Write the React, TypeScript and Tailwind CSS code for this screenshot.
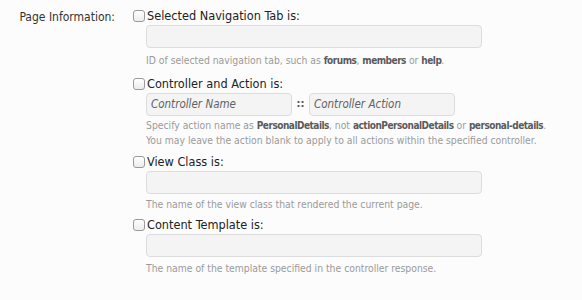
import type { ReactNode } from "react"

const font = { fontFamily: '"DejaVu Sans Condensed", "DejaVu Sans", sans-serif' }

function Box() {
  return (
    <span className="inline-block w-[12px] h-[12px] rounded-[3px] border border-[#9a9a9a] bg-gradient-to-b from-white to-[#ececec] shrink-0" />
  )
}

function Check({ label }: { label: string }) {
  return (
    <div className="flex items-center h-[14px] gap-[2px]">
      <Box />
      <span className="text-[12.6px] text-[#222] leading-none whitespace-nowrap">{label}</span>
    </div>
  )
}

function Field({ w = "w-[336px]", placeholder }: { w?: string; placeholder?: string }) {
  return (
    <div
      className={`${w} h-[23px] rounded-[4px] border border-[#dcdcdc] bg-[#f4f4f4] flex items-center px-[4px] text-[11.5px] italic text-[#626262]`}
    >
      {placeholder}
    </div>
  )
}

function Hint({ children }: { children: ReactNode }) {
  return <p className="text-[10.3px] leading-[14px] text-[#9a9a9a] whitespace-nowrap">{children}</p>
}

// bold words in the hints are narrower than DejaVu's bold
const B = ({ children }: { children: ReactNode }) => (
  <b className="font-bold text-[10px] tracking-[-0.5px] text-[#5a5a5a]">{children}</b>
)

export default function App() {
  return (
    <div className="w-[582px] h-[300px] bg-[#fcfcfc] flex pt-[9px]" style={font}>
      <div className="w-[115px] text-right text-[12px] text-[#333] leading-[14px] pt-[1px]">Page Information:</div>
      <div className="pl-[18px] flex flex-col">
        <Check label="Selected Navigation Tab is:" />
        <div className="pl-[13px] mt-[2px]">
          <Field />
          <div className="mt-[5px]">
            <Hint>
              ID of selected navigation tab, such as <B>forums</B>, <B>members</B> or <B>help</B>.
            </Hint>
          </div>
        </div>

        <div className="mt-[9px]">
          <Check label="Controller and Action is:" />
        </div>
        <div className="pl-[13px] mt-[2px]">
          <div className="flex items-center">
            <Field w="w-[146px]" placeholder="Controller Name" />
            <span className="w-[17px] text-center text-[11px] font-bold text-[#555]">::</span>
            <Field w="w-[146px]" placeholder="Controller Action" />
          </div>
          <div className="mt-[2px]">
            <Hint>
              Specify action name as <B>PersonalDetails</B>, not <B>actionPersonalDetails</B> or{" "}
              <B>personal-details</B>.
            </Hint>
            <Hint>You may leave the action blank to apply to all actions within the specified controller.</Hint>
          </div>
        </div>

        <div className="mt-[8px]">
          <Check label="View Class is:" />
        </div>
        <div className="pl-[13px] mt-[2px]">
          <Field />
          <div className="mt-[3px]">
            <Hint>The name of the view class that rendered the current page.</Hint>
          </div>
        </div>

        <div className="mt-[7px]">
          <Check label="Content Template is:" />
        </div>
        <div className="pl-[13px] mt-[2px]">
          <Field />
          <div className="mt-[4px]">
            <Hint>The name of the template specified in the controller response.</Hint>
          </div>
        </div>
      </div>
    </div>
  )
}
